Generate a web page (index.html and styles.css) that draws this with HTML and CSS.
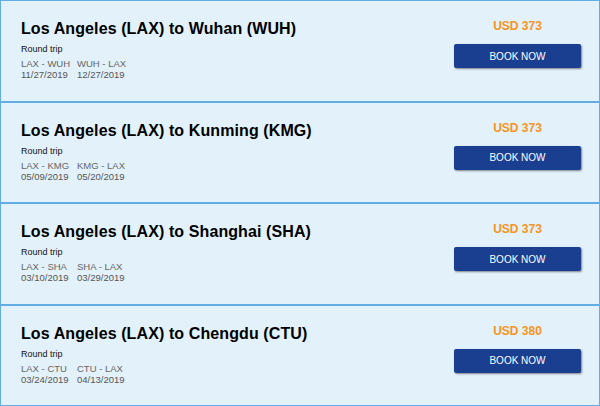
FILE: index.html
```html
<!DOCTYPE html>
<html lang="en">
<head>
  <meta charset="UTF-8" />
  <title>Flight deals</title>
  <link rel="stylesheet" href="styles.css">
</head>
<body>

  <!-- Deal list -->
  <div class="deals">

    <div class="deal">
      <div class="deal-info">
        <div class="route">Los Angeles (LAX) to Wuhan (WUH)</div>
        <div class="trip-type">Round trip</div>
        <div class="legs">
          <div class="leg">
            <div class="leg-code">LAX - WUH</div>
            <div class="leg-date">11/27/2019</div>
          </div>
          <div class="leg">
            <div class="leg-code">WUH - LAX</div>
            <div class="leg-date">12/27/2019</div>
          </div>
        </div>
      </div>
      <div class="deal-buy">
        <div class="price">USD 373</div>
        <button class="book-btn">BOOK NOW</button>
      </div>
    </div>

    <div class="deal">
      <div class="deal-info">
        <div class="route">Los Angeles (LAX) to Kunming (KMG)</div>
        <div class="trip-type">Round trip</div>
        <div class="legs">
          <div class="leg">
            <div class="leg-code">LAX - KMG</div>
            <div class="leg-date">05/09/2019</div>
          </div>
          <div class="leg">
            <div class="leg-code">KMG - LAX</div>
            <div class="leg-date">05/20/2019</div>
          </div>
        </div>
      </div>
      <div class="deal-buy">
        <div class="price">USD 373</div>
        <button class="book-btn">BOOK NOW</button>
      </div>
    </div>

    <div class="deal">
      <div class="deal-info">
        <div class="route">Los Angeles (LAX) to Shanghai (SHA)</div>
        <div class="trip-type">Round trip</div>
        <div class="legs">
          <div class="leg">
            <div class="leg-code">LAX - SHA</div>
            <div class="leg-date">03/10/2019</div>
          </div>
          <div class="leg">
            <div class="leg-code">SHA - LAX</div>
            <div class="leg-date">03/29/2019</div>
          </div>
        </div>
      </div>
      <div class="deal-buy">
        <div class="price">USD 373</div>
        <button class="book-btn">BOOK NOW</button>
      </div>
    </div>

    <div class="deal">
      <div class="deal-info">
        <div class="route">Los Angeles (LAX) to Chengdu (CTU)</div>
        <div class="trip-type">Round trip</div>
        <div class="legs">
          <div class="leg">
            <div class="leg-code">LAX - CTU</div>
            <div class="leg-date">03/24/2019</div>
          </div>
          <div class="leg">
            <div class="leg-code">CTU - LAX</div>
            <div class="leg-date">04/13/2019</div>
          </div>
        </div>
      </div>
      <div class="deal-buy">
        <div class="price">USD 380</div>
        <button class="book-btn">BOOK NOW</button>
      </div>
    </div>

  </div>

</body>
</html>
```

FILE: styles.css
```css
html, body {
  margin: 0;
  font-family: 'Liberation Sans', Arial, sans-serif;
  background: #fff;
}

.deals {
  width: 600px;
}

.deal {
  box-sizing: border-box;
  height: 101.5px;
  display: flex;
  justify-content: space-between;
  padding: 18px 18px 0 20px;
  background: #e3f1fa;
  border: 1px solid #62aee2;
}

.route {
  font-size: 16px;
  line-height: 20px;
  font-weight: bold;
  letter-spacing: 0.1px;
  color: #000;
}

.trip-type {
  margin-top: 4px;
  font-size: 9px;
  line-height: 12px;
  color: #111;
}

.legs {
  display: flex;
  margin-top: 3px;
}

.leg {
  width: 56px;
  font-size: 9.5px;
  line-height: 11px;
  color: #555;
}

.leg-code {
  color: #666;
}

.deal-buy {
  width: 127px;
  display: flex;
  flex-direction: column;
  align-items: center;
}

.price {
  font-size: 12px;
  line-height: 14px;
  font-weight: bold;
  color: #f7931e;
}

.book-btn {
  margin-top: 11px;
  width: 127px;
  height: 24px;
  padding: 0;
  border: none;
  border-radius: 2px;
  background: #1a3f91;
  color: #fff;
  font-family: 'Liberation Sans', Arial, sans-serif;
  font-size: 10px;
  box-shadow: 1px 1px 2px rgba(0, 0, 0, 0.45);
  cursor: pointer;
}
```
